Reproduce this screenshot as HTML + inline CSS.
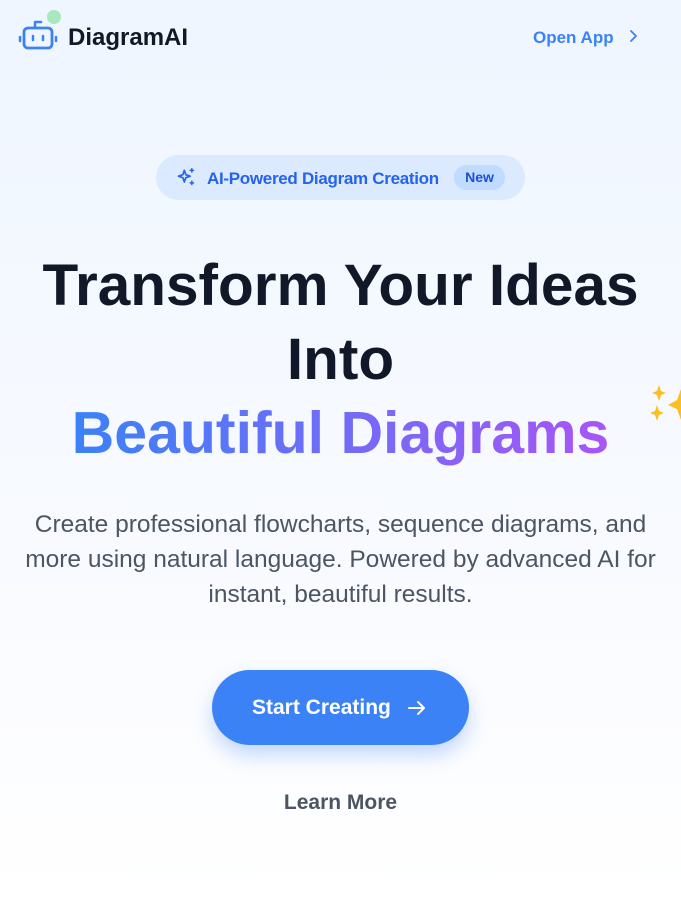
<!DOCTYPE html>
<html><head><meta charset="utf-8"><style>
*{margin:0;padding:0;box-sizing:border-box}
body{width:681px;height:901px;overflow:hidden;font-family:"Liberation Sans",sans-serif;background:linear-gradient(180deg,#eff6ff 0%,#f8faff 60%,#fff 100%);position:relative}
.abs{position:absolute}
</style></head><body>
<svg class="abs" style="left:18px;top:10px" width="46" height="42" viewBox="0 0 46 42">
<circle cx="36" cy="7" r="7" fill="#a7e8bd"/>
<path d="M17 18v-6h6" fill="none" stroke="#3b82f6" stroke-width="2.5" stroke-linecap="round" stroke-linejoin="round"/>
<rect x="6" y="18" width="28" height="20" rx="4" fill="none" stroke="#3b82f6" stroke-width="2.8"/>
<path d="M2 27v4M38 27v4M15 26v4M25 26v4" stroke="#3b82f6" stroke-width="2.5" stroke-linecap="round"/>
</svg>
<div class="abs" style="left:68px;top:24px;font-size:24px;font-weight:700;color:#111827">DiagramAI</div>
<div class="abs" style="left:533px;top:28px;font-size:17px;font-weight:700;color:#3b82f6">Open App</div>
<svg class="abs" style="left:627px;top:29px" width="12" height="14" viewBox="0 0 12 14"><path d="M4 2l5 5-5 5" fill="none" stroke="#3b82f6" stroke-width="1.8" stroke-linecap="round" stroke-linejoin="round"/></svg>
<div class="abs" style="left:156px;top:155px;width:369px;height:45px;border-radius:23px;background:#dbeafe"></div>
<svg class="abs" style="left:176px;top:167px" width="20" height="20" viewBox="0 0 24 24"><path d="M10 4l1.8 5.2L17 11l-5.2 1.8L10 18l-1.8-5.2L3 11l5.2-1.8z" fill="none" stroke="#2563eb" stroke-width="2" stroke-linejoin="round"/><path d="M19 2v4M17 4h4M19 17v4M17 19h4" stroke="#2563eb" stroke-width="1.8" stroke-linecap="round"/></svg>
<div class="abs" style="left:207px;top:169px;font-size:17px;font-weight:700;color:#2563eb;letter-spacing:-0.3px">AI-Powered Diagram Creation</div>
<div class="abs" style="left:454px;top:165px;width:51px;height:25px;border-radius:13px;background:#bfdbfe;color:#1d4ed8;font-size:14px;font-weight:700;text-align:center;line-height:25px">New</div>
<div class="abs" style="left:0;width:681px;top:249px;text-align:center;font-size:58.5px;font-weight:700;color:#111827;line-height:74px">Transform Your Ideas<br>Into</div>
<div class="abs" style="left:0;width:681px;top:396px;text-align:center;font-size:59px;font-weight:700;line-height:74px"><span style="background:linear-gradient(90deg,#3b82f6,#a855f7);-webkit-background-clip:text;background-clip:text;color:transparent">Beautiful Diagrams</span></div>
<svg class="abs" style="left:648px;top:385px" width="33" height="42" viewBox="0 0 33 42"><path d="M11 0l2 6 5 2-5 2-2 6-2-6-5-2 5-2z" fill="#fbbf24"/><path d="M9 20l2 6 5 2-5 2-2 6-2-6-5-2 5-2z" fill="#fbbf24"/><path d="M33 4l-4 11-9 5 9 4 4 11z" fill="#fbbf24"/></svg>
<div class="abs" style="left:0;width:681px;top:507px;text-align:center;font-size:24.5px;color:#4b5563;line-height:35px;white-space:nowrap">Create professional flowcharts, sequence diagrams, and<br>more using natural language. Powered by advanced AI for<br>instant, beautiful results.</div>
<div class="abs" style="left:212px;top:670px;width:257px;height:75px;border-radius:38px;background:#3b82f6;box-shadow:0 10px 20px rgba(59,130,246,.3)"></div>
<div class="abs" style="left:252px;top:696px;font-size:21px;font-weight:700;color:#fff">Start Creating</div>
<svg class="abs" style="left:406px;top:697px" width="22" height="22" viewBox="0 0 22 22"><path d="M3 11h15M12 5l6 6-6 6" fill="none" stroke="#fff" stroke-width="2" stroke-linecap="round" stroke-linejoin="round"/></svg>
<div class="abs" style="left:0;width:681px;top:791px;text-align:center;font-size:21px;font-weight:700;color:#4b5563">Learn More</div>
</body></html>
